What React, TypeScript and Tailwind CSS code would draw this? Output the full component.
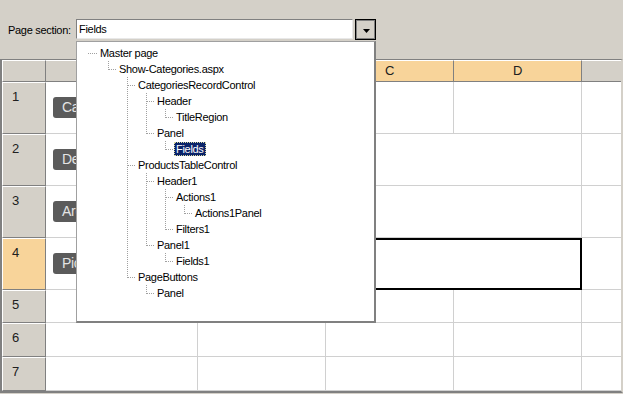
import React from "react";

type Node = { t: string; l: number; last: boolean; sel?: boolean };

const tree: Node[] = [
  { t: "Master page", l: 0, last: true },
  { t: "Show-Categories.aspx", l: 1, last: true },
  { t: "CategoriesRecordControl", l: 2, last: false },
  { t: "Header", l: 3, last: false },
  { t: "TitleRegion", l: 4, last: true },
  { t: "Panel", l: 3, last: true },
  { t: "Fields", l: 4, last: true, sel: true },
  { t: "ProductsTableControl", l: 2, last: false },
  { t: "Header1", l: 3, last: false },
  { t: "Actions1", l: 4, last: false },
  { t: "Actions1Panel", l: 5, last: true },
  { t: "Filters1", l: 4, last: true },
  { t: "Panel1", l: 3, last: true },
  { t: "Fields1", l: 4, last: true },
  { t: "PageButtons", l: 2, last: true },
  { t: "Panel", l: 3, last: true },
];

const DOT = "#a0a0a0";

// one 19x16 column of the tree lines
function LineCell({ kind }: { kind: "none" | "pass" | "tee" | "end" | "root" }) {
  return (
    <svg width="19" height="16" className="shrink-0" shapeRendering="crispEdges">
      {(kind === "pass" || kind === "tee") && (
        <line x1="10.5" y1="0" x2="10.5" y2="16" stroke={DOT} strokeDasharray="1 1" />
      )}
      {kind === "end" && <line x1="10.5" y1="0" x2="10.5" y2="9" stroke={DOT} strokeDasharray="1 1" />}
      {(kind === "tee" || kind === "end") && (
        <line x1="11" y1="8.5" x2="19" y2="8.5" stroke={DOT} strokeDasharray="1 1" />
      )}
      {kind === "root" && <line x1="9" y1="8.5" x2="19" y2="8.5" stroke={DOT} strokeDasharray="1 1" />}
    </svg>
  );
}

function TreePopup() {
  const lastAt: boolean[] = [];
  return (
    <div className="absolute left-[76px] top-[41px] w-[300px] h-[282px] bg-white border-l border-t border-[#a0a0a0] border-r-2 border-b-2 border-r-[#808080] border-b-[#808080] pl-[2px] pt-[3px]">
      {tree.map((n, i) => {
        lastAt[n.l] = n.last;
        const cols = [];
        for (let c = 0; c < n.l; c++) {
          cols.push(<LineCell key={c} kind={c > 0 && !lastAt[c] ? "pass" : "none"} />);
        }
        cols.push(<LineCell key="own" kind={n.l === 0 ? "root" : n.last ? "end" : "tee"} />);
        return (
          <div key={i} className="flex h-4 items-center">
            {cols}
            <span
              className={
                n.sel
                  ? "h-[14px] px-px leading-[12px] bg-[#0a246a] text-white border border-dotted border-[#d8d8a0] whitespace-nowrap"
                  : "px-[2px] leading-[14px] text-black whitespace-nowrap"
              }
            >
              {n.t}
            </span>
          </div>
        );
      })}
    </div>
  );
}

function RowHead({ n, active }: { n: number; active?: boolean }) {
  return (
    <div
      className={`${active ? "bg-[#f8d49a]" : "bg-[#d4d0c8]"} border-l border-t border-l-white border-t-white border-r border-b border-r-[#808080] border-b-[#808080] pl-[9px] pt-[6px] text-[13px] leading-[15px] text-[#202020]`}
    >
      {n}
    </div>
  );
}

function ColHead({ label, active, last }: { label: string; active?: boolean; last?: boolean }) {
  return (
    <div
      className={`${active ? "bg-[#f8d49a]" : "bg-[#d4d0c8]"} border-t border-t-white border-b border-b-[#808080] ${last ? "" : "border-r border-r-[#808080]"} flex items-center justify-center text-[13px] text-[#202020]`}
    >
      {label}
    </div>
  );
}

function Cell({ span, selected, last }: { span?: boolean; selected?: boolean; last?: boolean }) {
  if (selected) {
    return <div className="col-span-2 bg-white border-2 border-black" />;
  }
  return (
    <div
      className={`${span ? "col-span-2" : ""} bg-white border-b border-[#d0d0d0] ${last ? "" : "border-r"}`}
    />
  );
}

function FieldCell({ label }: { label?: string }) {
  return (
    <div className="bg-white border-b border-r border-[#d0d0d0] flex items-center pl-[7px] overflow-hidden">
      {label && (
        <span className="h-[21px] px-[9px] rounded-[3px] bg-[#5b5b5b] text-[#e4e4e4] text-[14px] leading-[21px] whitespace-nowrap">
          {label}
        </span>
      )}
    </div>
  );
}

export default function App() {
  const rows: { n: number; label?: string; merged?: boolean; selected?: boolean }[] = [
    { n: 1, label: "Category Name" },
    { n: 2, label: "Description", merged: true },
    { n: 3, label: "Archived", merged: true },
    { n: 4, label: "Picture", merged: true, selected: true },
    { n: 5 },
    { n: 6 },
    { n: 7 },
  ];

  return (
    <div className="relative w-[623px] h-[394px] overflow-hidden bg-[#d4d0c8] font-['Liberation_Sans',Arial,sans-serif] text-[11px] tracking-[-0.3px] text-black">
      {/* toolbar */}
      <div className="h-[59px] flex items-start pt-[19px] pl-[8px]">
        <span className="w-[68px] leading-[20px] pt-px">Page section:</span>
        <div className="w-[277px] h-[20px] bg-white border-t border-l border-[#808080] border-b border-r border-b-[#e8e8e8] border-r-[#e8e8e8] pl-[2px] leading-[18px]">
          Fields
        </div>
        <div className="ml-[2px] w-[21px] h-[21px] border border-black">
          <div className="w-full h-full border border-[#808080] bg-[#d4d0c8] flex items-center justify-center pl-[2px] pt-[2px]">
            <svg width="7" height="4" viewBox="0 0 7 4">
              <path d="M0 0h7L3.5 4z" fill="#000" />
            </svg>
          </div>
        </div>
      </div>

      {/* sheet */}
      <div className="grid grid-cols-[44px_152px_128px_128px_128px_39px] grid-rows-[22px_52px_52px_52px_52px_33px_34px_34px] border-t border-t-[#808080] border-l-2 border-l-[#808080] border-r-2 border-r-[#d4d0c8] border-b-2 border-b-[#808080]">
        <div className="bg-[#d4d0c8] border-l border-t border-l-white border-t-white border-r border-b border-r-[#808080] border-b-[#808080]" />
        <ColHead label="A" />
        <ColHead label="B" />
        <ColHead label="C" active />
        <ColHead label="D" active />
        <ColHead label="" last />

        {rows.map((r) => (
          <React.Fragment key={r.n}>
            <RowHead n={r.n} active={r.selected} />
            <FieldCell label={r.label} />
            <Cell />
            {r.merged ? (
              <Cell span selected={r.selected} />
            ) : (
              <>
                <Cell />
                <Cell />
              </>
            )}
            <Cell last />
          </React.Fragment>
        ))}
      </div>

      <TreePopup />
    </div>
  );
}
